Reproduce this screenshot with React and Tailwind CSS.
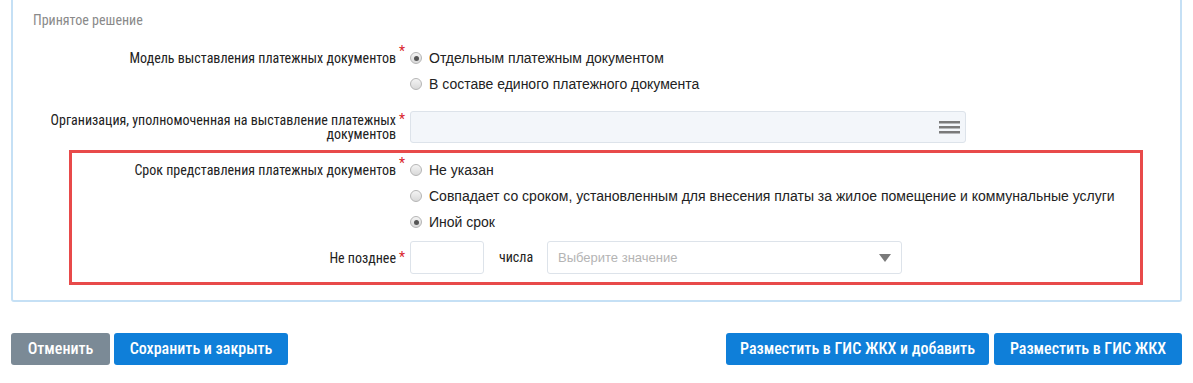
import React from 'react';

const cond = "font-['Roboto_Condensed','Liberation_Sans_Narrow','DejaVu_Sans_Condensed',sans-serif]";

// Radio bullet, grey glossy look
const Radio = ({ checked }) => (
  <span className="w-[12px] h-[12px] rounded-full border border-[#b5b5b5] bg-gradient-to-b from-[#f4f4f4] to-[#d9d9d9] flex items-center justify-center shrink-0">
    {checked && <span className="w-[5px] h-[5px] rounded-full bg-[#555]" />}
  </span>
);

const Option = ({ checked, children }) => (
  <div className="h-[26px] flex items-center gap-[7px]">
    <Radio checked={checked} />
    <span className="text-[14px] text-[#222] font-['Liberation_Sans',Arial,sans-serif]">{children}</span>
  </div>
);

const Label = ({ width, children, className = '' }) => (
  <div className={`${width} relative shrink-0 text-right pr-[14px] text-[14px] leading-[14px] text-[#222] ${cond} ${className}`}>
    {children}
    <span className="absolute right-[5px] -top-[1px] text-[#d9242b] text-[14px]">*</span>
  </div>
);

const Button = ({ gray, children, className = '' }) => (
  <button className={`h-[32px] rounded-[3px] text-white text-[16px] font-medium ${cond} ${gray ? 'bg-[#7b8a96]' : 'bg-[#0f7fd9]'} ${className}`}>
    {children}
  </button>
);

export default function App() {
  return (
    <div className="w-[1193px] h-[383px] bg-white overflow-hidden">
      {/* panel */}
      <div className="ml-[11px] w-[1171px] h-[302px] border-l-2 border-r-2 border-b-2 border-[#c5e0f5] rounded-b-[3px] pt-[9px]">
        <div className={`pl-[20px] text-[14px] text-[#8a8a8a] h-[22px] leading-[22px] ${cond}`}>Принятое решение</div>

        <div className="mt-[14px] flex">
          <Label width="w-[397px]" className="pt-[6px]">Модель выставления платежных документов</Label>
          <div className="flex flex-col">
            <Option checked>Отдельным платежным документом</Option>
            <Option>В составе единого платежного документа</Option>
          </div>
        </div>

        <div className="mt-[14px] flex items-center">
          <Label width="w-[397px]" className="pl-[10px]">Организация, уполномоченная на выставление платежных документов</Label>
          <div className="w-[556px] h-[32px] rounded-[3px] border border-[#dde3ea] bg-[#f3f6fa] flex items-center justify-end pr-[5px]">
            <svg width="21" height="14" viewBox="0 0 21 14">
              <rect x="0" y="1" width="21" height="2.5" fill="#7a7a7a" />
              <rect x="0" y="6" width="21" height="2.5" fill="#7a7a7a" />
              <rect x="0" y="11" width="21" height="2.5" fill="#7a7a7a" />
            </svg>
          </div>
        </div>

        {/* highlighted block */}
        <div className="mt-[7px] ml-[56px] w-[1074px] h-[135px] border-[3px] border-[#e84a4a] pt-[4px]">
          <div className="flex">
            <Label width="w-[338px]" className="pt-[6px]">Срок представления платежных документов</Label>
            <div className="flex flex-col">
              <Option>Не указан</Option>
              <Option>Совпадает со сроком, установленным для внесения платы за жилое помещение и коммунальные услуги</Option>
              <Option checked>Иной срок</Option>
            </div>
          </div>
          <div className="mt-[6px] flex items-center">
            <Label width="w-[338px]">Не позднее</Label>
            <div className="w-[74px] h-[33px] rounded-[3px] border border-[#dde3ea] bg-white" />
            <span className={`w-[63px] pl-[15px] text-[14px] text-[#222] ${cond}`}>числа</span>
            <div className="w-[355px] h-[33px] rounded-[3px] border border-[#dde3ea] bg-white flex items-center justify-between pl-[10px] pr-[10px]">
              <span className="text-[13px] text-[#b4b4b4] font-['Liberation_Sans',Arial,sans-serif]">Выберите значение</span>
              <svg width="12" height="8" viewBox="0 0 12 8">
                <path d="M0 0 H12 L6 8 Z" fill="#7a7a7a" />
              </svg>
            </div>
          </div>
        </div>
      </div>

      {/* buttons */}
      <div className="mt-[31px] px-[11px] flex items-center">
        <Button gray className="w-[99px]">Отменить</Button>
        <Button className="ml-[4px] w-[174px]">Сохранить и закрыть</Button>
        <Button className="ml-auto w-[263px]">Разместить в ГИС ЖКХ и добавить</Button>
        <Button className="ml-[5px] w-[188px]">Разместить в ГИС ЖКХ</Button>
      </div>
    </div>
  );
}
